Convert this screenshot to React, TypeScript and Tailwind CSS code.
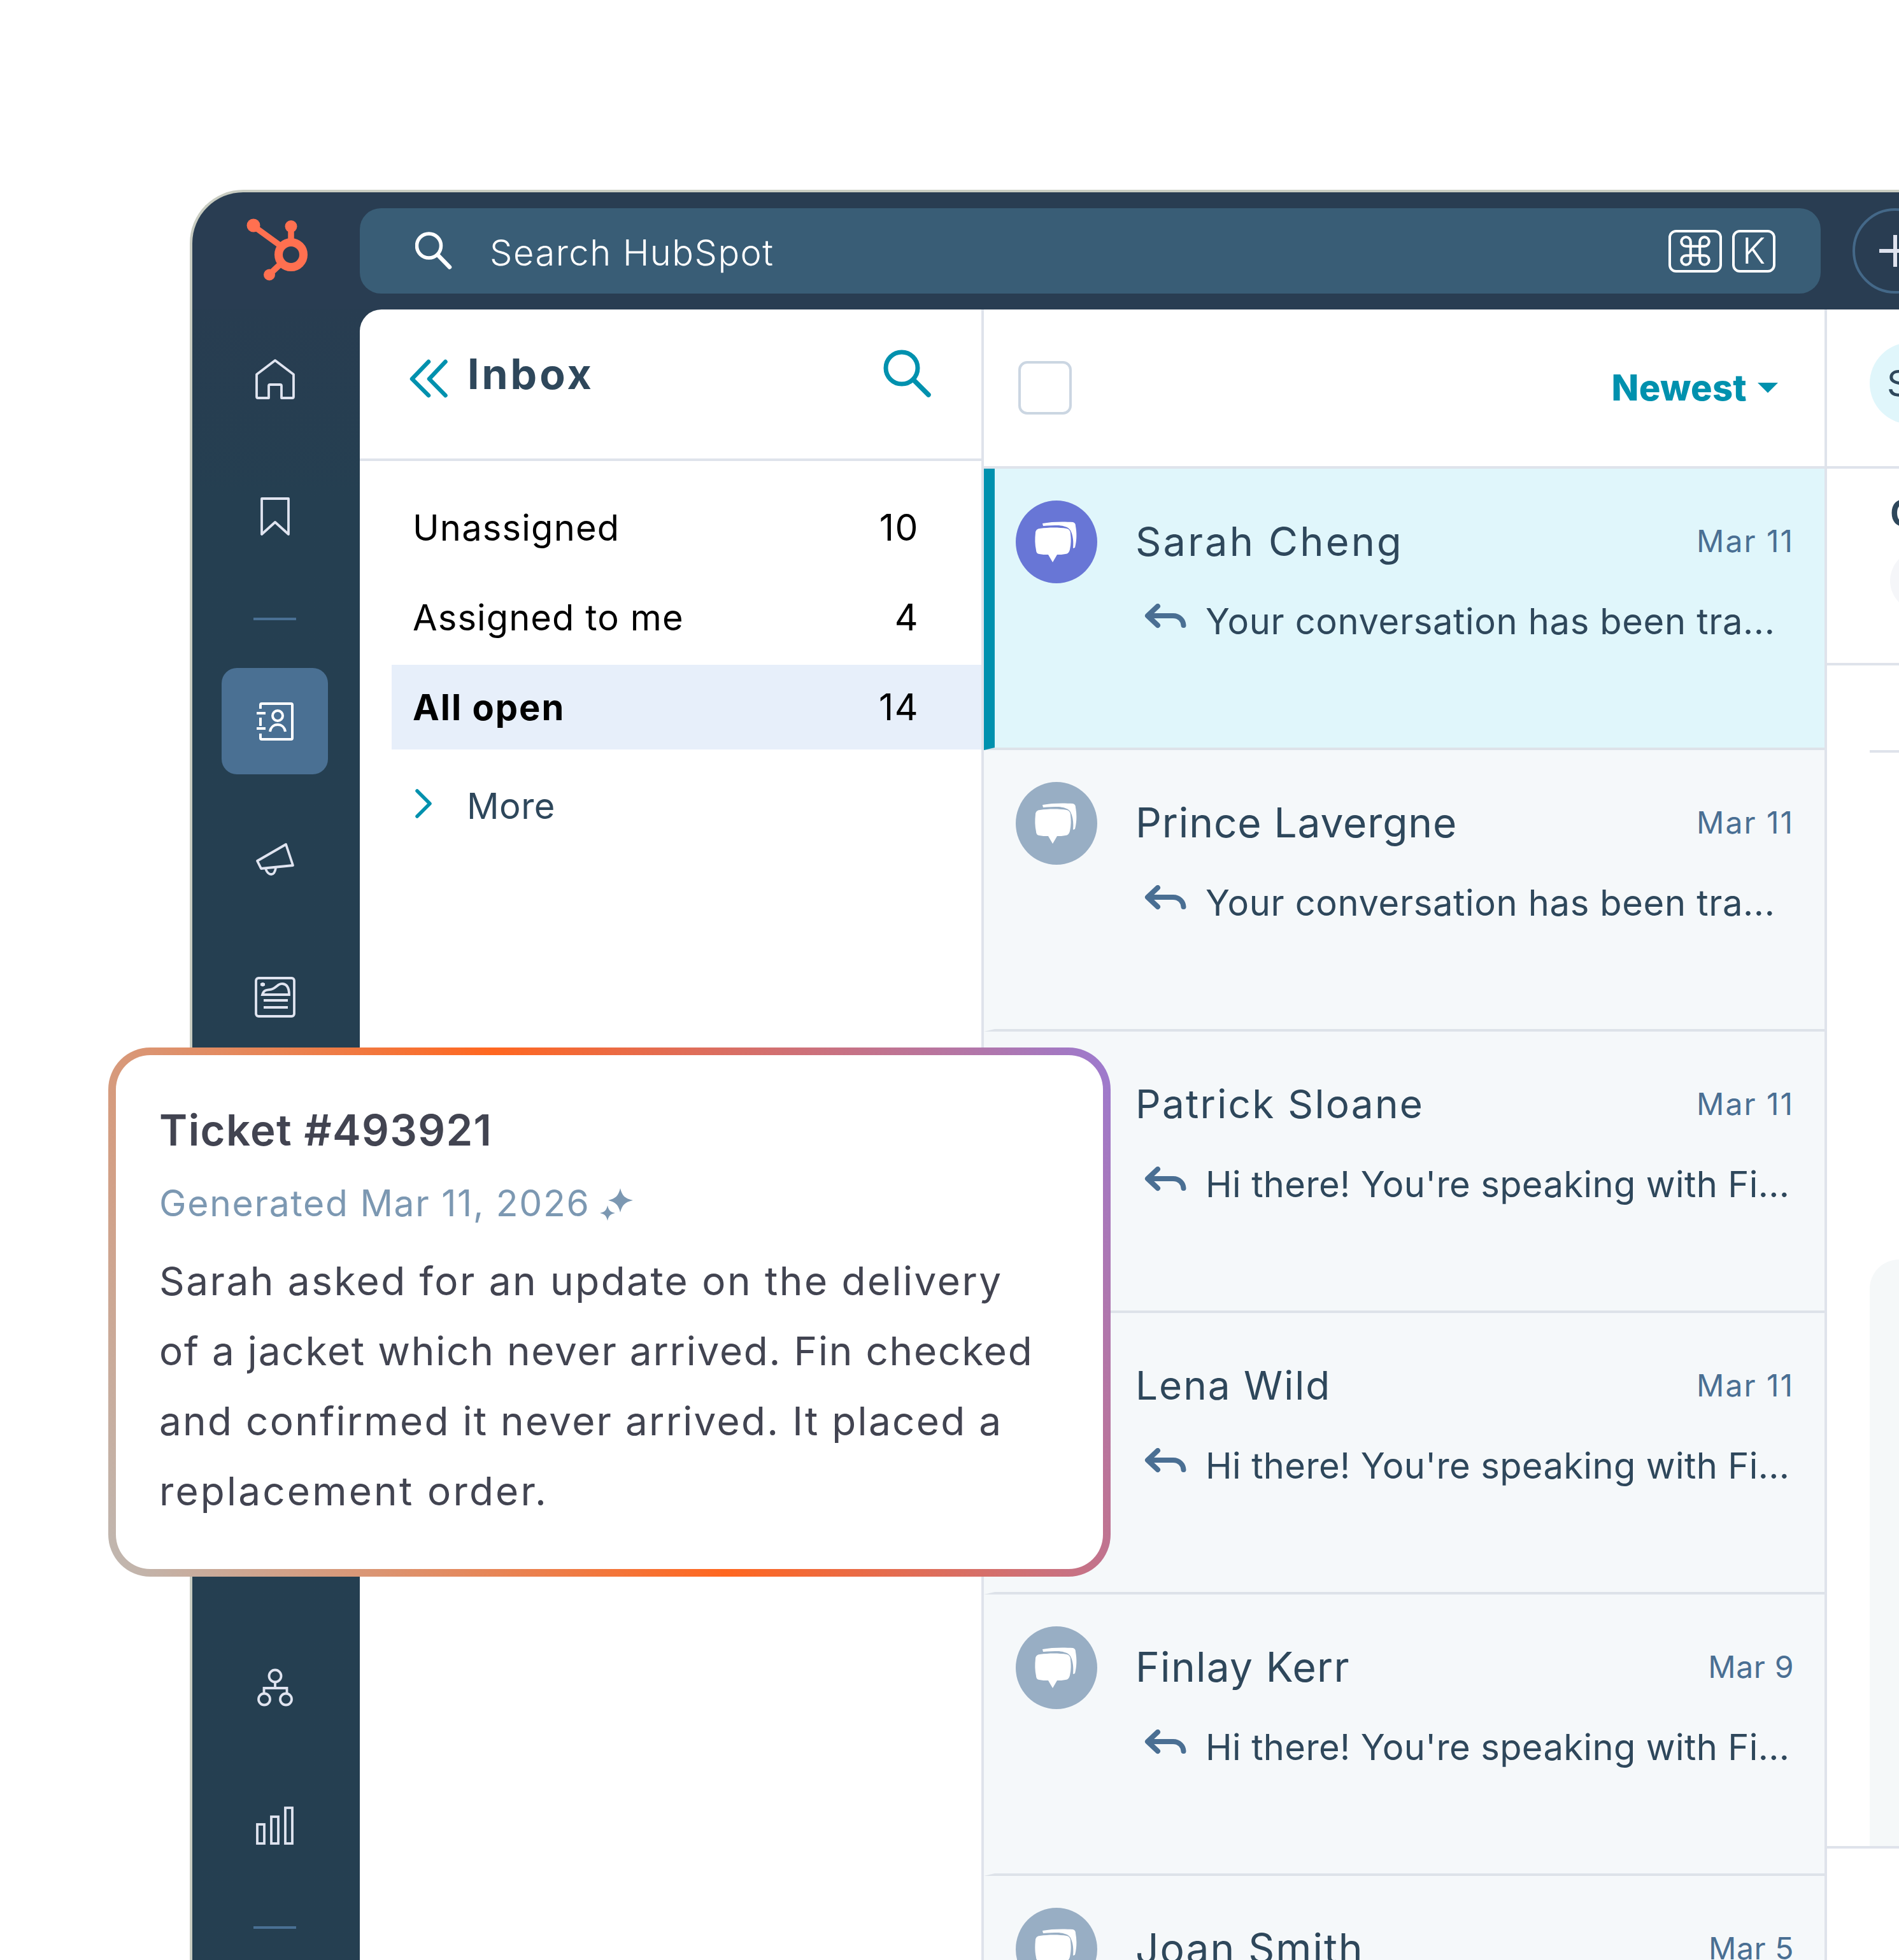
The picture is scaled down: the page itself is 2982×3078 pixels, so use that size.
import { ReactNode } from "react";
import { Command } from "lucide-react";
import clsx from "clsx";

type Conversation = {
  name: string;
  nameClass: string;
  date: string;
  dateClass: string;
  preview: string;
  previewClass: string;
  selected?: boolean;
};

const YOUR = "Your conversation has been tra...";
const HI = "Hi there! You're speaking with Fi...";

const conversations: Conversation[] = [
  {
    name: "Sarah Cheng",
    nameClass: "text-[63px] tracking-[3.2px]",
    date: "Mar 11",
    dateClass: "tracking-[2px]",
    preview: YOUR,
    previewClass: "tracking-[0.68px]",
    selected: true,
  },
  {
    name: "Prince Lavergne",
    nameClass: "text-[64px] tracking-[0.9px]",
    date: "Mar 11",
    dateClass: "tracking-[2px]",
    preview: YOUR,
    previewClass: "tracking-[0.68px]",
  },
  {
    name: "Patrick Sloane",
    nameClass: "text-[62px] tracking-[2.3px]",
    date: "Mar 11",
    dateClass: "tracking-[2px]",
    preview: HI,
    previewClass: "tracking-[0.4px]",
  },
  {
    name: "Lena Wild",
    nameClass: "text-[62px] tracking-[2px]",
    date: "Mar 11",
    dateClass: "tracking-[2px]",
    preview: HI,
    previewClass: "tracking-[0.4px]",
  },
  {
    name: "Finlay Kerr",
    nameClass: "text-[64px] tracking-[1.3px]",
    date: "Mar 9",
    dateClass: "tracking-[0.6px]",
    preview: HI,
    previewClass: "tracking-[0.4px]",
  },
  {
    name: "Joan Smith",
    nameClass: "text-[64px] tracking-[2px]",
    date: "Mar 5",
    dateClass: "tracking-[0.6px]",
    preview: HI,
    previewClass: "tracking-[0.4px]",
  },
];

const folders = [
  { label: "Unassigned", count: 10, className: "tracking-[1.2px]" },
  { label: "Assigned to me", count: 4, className: "tracking-[1.1px]" },
  {
    label: "All open",
    count: 14,
    className: "font-bold tracking-[2px]",
    active: true,
  },
];

export default function App() {
  return (
    <div className="relative h-[3078px] w-[2982px] overflow-hidden bg-white pt-[298px] pl-[298px] font-['Inter',sans-serif] leading-none whitespace-nowrap">
      <div className="flex h-[2780px] flex-col overflow-hidden rounded-tl-[84px] border-t-4 border-l-4 border-[#c8ccc1] bg-[#293d52]">
        <TopBar />
        <div className="flex flex-1 bg-gradient-to-b from-[#283d51] to-[#253f51] to-10%">
          <Sidebar />
          <div className="flex flex-1 overflow-hidden rounded-tl-[34px] bg-white">
            <InboxPanel />
            <ConversationList />
            <DetailPanel />
          </div>
        </div>
      </div>
      <TicketCard />
    </div>
  );
}

function TopBar() {
  return (
    <div className="flex h-[184px] shrink-0 pt-[25px]">
      <div className="w-[263px] shrink-0 pt-[13px] pl-[82px]">
        <HubSpotLogo />
      </div>
      <div className="flex h-[134px] w-[2294px] shrink-0 items-center rounded-[33px] bg-[#395d76] pr-[71px] pl-[87px] text-white">
        <svg width="60" height="60" viewBox="0 0 60 60" fill="none">
          <circle cx="21.500" cy="22" r="19" stroke="currentColor" strokeWidth="5.500" />
          <path d="M35.500 36.500 54 55.500" stroke="currentColor" strokeWidth="6.500" strokeLinecap="round" />
        </svg>
        <span className="ml-[57px] pt-[5px] text-[56px] font-[340] tracking-[1.5px]">
          Search HubSpot
        </span>
        <span className="ml-auto flex h-[67px] w-[84px] items-center justify-center rounded-[12px] border-4 border-white">
          <Command size={58} strokeWidth={1.7} />
        </span>
        <span className="ml-4 flex h-[67px] w-[68px] items-center justify-center rounded-[12px] border-4 border-white text-[56px] font-light">
          K
        </span>
      </div>
      <div className="ml-[50px] flex h-[134px] w-[134px] shrink-0 items-center justify-center rounded-full border-4 border-[#446888]">
        <svg width="52" height="52" viewBox="0 0 52 52" stroke="#dfe3ee" strokeWidth="6">
          <path d="M26 1v50M1 26h50" />
        </svg>
      </div>
    </div>
  );
}

function HubSpotLogo() {
  return (
    <svg width="104" height="104" viewBox="0 0 104 104" fill="none">
      <g stroke="#ff7050" strokeWidth="9.500">
        <path d="M14 15 58 47M73 17v24M39 91 56 75" />
      </g>
      <circle cx="73" cy="60" r="19.5" stroke="#ff7050" strokeWidth="13" />
      <circle cx="14" cy="14" r="10.5" fill="#ff7050" />
      <circle cx="73" cy="15.500" r="9.5" fill="#ff7050" />
      <circle cx="39" cy="91.500" r="9" fill="#ff7050" />
    </svg>
  );
}

function NavIcon({
  children,
  className,
}: {
  children: ReactNode;
  className?: string;
}) {
  return (
    <svg
      width="64"
      height="64"
      viewBox="0 0 64 64"
      fill="none"
      stroke="#e0e4f0"
      strokeWidth="3.8"
      className={clsx("shrink-0", className)}
    >
      {children}
    </svg>
  );
}

function Sidebar() {
  return (
    <div className="flex w-[263px] shrink-0 flex-col items-center pr-1">
      {/* Home */}
      <NavIcon className="mt-[77px]">
        <path
          d="M32 3 3 25v35a2 2 0 0 0 2 2h17V43a2 2 0 0 1 2-2h16a2 2 0 0 1 2 2v19h17a2 2 0 0 0 2-2V25Z"
          strokeLinejoin="round"
        />
      </NavIcon>
      {/* Bookmarks */}
      <NavIcon className="mt-[152px]">
        <path d="M11 4h42v56L32 41 11 60Z" strokeLinejoin="round" />
      </NavIcon>
      <div className="mt-[127px] h-1 w-[67px] shrink-0 bg-[#4a7094]" />
      {/* Contacts */}
      <div className="mt-[75px] flex h-[167px] w-[167px] shrink-0 items-center justify-center rounded-[24px] bg-[#4a7093]">
        <NavIcon>
          <g stroke="#fff" strokeWidth="4">
            <path d="M9 12V6a2 2 0 0 1 2-2h46a2 2 0 0 1 2 2v52a2 2 0 0 1-2 2H11a2 2 0 0 1-2-2v-7M9 26v13" />
            <path d="M3 19h14M3 43h14" />
            <circle cx="36" cy="23" r="8" />
            <path d="M24 48c1-7 6-11 12-11s11 4 12 11" />
          </g>
        </NavIcon>
      </div>
      {/* Marketing */}
      <NavIcon className="mt-[102px]">
        <path d="M4 34 49 8 60 41 10 46Z" strokeLinejoin="round" />
        <path d="M17 46c2 6 5 9 9 9 4 0 6-4 7-10" />
      </NavIcon>
      {/* Content */}
      <NavIcon className="mt-[152px]">
        <rect x="2" y="2" width="60" height="60" rx="4" />
        <path d="M12 28c3-10 9-6 16-9 7-3 9-9 16-8 8 1 10 9 10 17Z" />
        <path d="M14 37h38M14 48h38M9 12h7M12.500 9v6" />
      </NavIcon>
      {/* Automation */}
      <NavIcon className="mt-[1020px]">
        <circle cx="32" cy="14" r="9.500" />
        <circle cx="15" cy="50.500" r="9" />
        <circle cx="49" cy="50.500" r="9" />
        <path d="M32 23v10M14.500 42v-9h36v9" />
      </NavIcon>
      {/* Reporting */}
      <NavIcon className="mt-[153px]">
        <rect x="4" y="30" width="11" height="30" />
        <rect x="26" y="18" width="11" height="42" />
        <rect x="48" y="4" width="11" height="56" />
      </NavIcon>
      <div className="mt-[126px] h-1 w-[67px] shrink-0 bg-[#4a7094]" />
    </div>
  );
}

function InboxPanel() {
  return (
    <div className="w-[976px] shrink-0">
      <div className="flex h-[238px] border-b-4 border-[#dfe3eb] pr-[78px] pl-[78px]">
        <svg width="62" height="62" viewBox="0 0 62 62" fill="none" stroke="#0091ae" strokeWidth="6.500" strokeLinecap="round" strokeLinejoin="round" className="mt-[77px]">
          <path d="M30 5 4 32l26 26M56.500 5 31 32l25.500 26" />
        </svg>
        <span className="mt-[68px] ml-[29px] text-[66px] font-bold tracking-[4px] text-[#2e475b]">
          Inbox
        </span>
        <svg width="76" height="76" viewBox="0 0 76 76" fill="none" stroke="#0091ae" className="mt-[62px] ml-auto">
          <circle cx="29" cy="30" r="25" strokeWidth="7" />
          <path d="M47 48 71 72" strokeWidth="7.500" strokeLinecap="round" />
        </svg>
      </div>
      <div className="mt-[38px] flex flex-col gap-2 text-[56px] text-black">
        {folders.map((folder) => (
          <div
            key={folder.label}
            className={clsx(
              "ml-[50px] flex h-[133px] items-center justify-between pr-[98px] pl-[33px]",
              folder.active && "bg-[#e7effa]"
            )}
          >
            <span className={folder.className}>{folder.label}</span>
            <span className="text-[57px] tracking-[1.5px]">{folder.count}</span>
          </div>
        ))}
      </div>
      <div className="mt-[60px] flex text-[56px] text-[#2e475b]">
        <svg width="27" height="46" viewBox="0 0 27 46" fill="none" stroke="#0091ae" strokeWidth="5.500" strokeLinecap="round" strokeLinejoin="round" className="mt-[2px] ml-[87px]">
          <path d="M3 3 23 23 3 43" />
        </svg>
        <span className="mt-px ml-[54px] tracking-[0.5px]">More</span>
      </div>
    </div>
  );
}

function ConversationList() {
  return (
    <div className="w-[1324px] shrink-0 overflow-hidden border-l-4 border-[#dfe3eb]">
      <div className="flex h-[250px] items-center border-b-4 border-[#dfe3eb] pr-[72px] pl-[54px]">
        <div className="h-[84px] w-[84px] rounded-[14px] border-4 border-[#cbd6e2]" />
        <span className="ml-auto text-[56px] font-extrabold tracking-[0.3px] text-[#0091ae]">
          Newest
        </span>
        <svg width="34" height="17" viewBox="0 0 34 17" className="ml-4">
          <path d="M1 0h32L17 16Z" fill="#0091ae" />
        </svg>
      </div>
      {conversations.map((conversation) => (
        <ConversationRow key={conversation.name} {...conversation} />
      ))}
    </div>
  );
}

function ConversationRow({
  name,
  nameClass,
  date,
  dateClass,
  preview,
  previewClass,
  selected,
}: Conversation) {
  return (
    <div
      className={clsx(
        "h-[442px] border-b-4 border-l-[17px] border-b-[#dde2e9] pt-[50px] pr-[48px] pl-[33px]",
        selected
          ? "border-l-[#0091ae] bg-[#e0f6fb]"
          : "border-l-[#f5f8fa] bg-[#f5f8fa]"
      )}
    >
      <div className="flex h-[130px] items-center">
        <ChatAvatar color={selected ? "#6876d6" : "#98aec4"} />
        <span className={clsx("-mt-[2px] ml-[60px] text-[#2e475b]", nameClass)}>
          {name}
        </span>
        <span
          className={clsx(
            "-mt-[2px] ml-auto text-[48px] text-[#4a6f93]",
            dateClass
          )}
        >
          {date}
        </span>
      </div>
      <div className="mt-[32px] ml-[201px] flex">
        <svg width="68" height="40" viewBox="0 0 68 40" fill="none" stroke="#4a6f93" strokeWidth="8" strokeLinecap="round" strokeLinejoin="round">
          <path d="M22 4 6 19 22 34M7 19H46C56 19 62 26 62.500 34" />
        </svg>
        <span
          className={clsx("ml-[29px] text-[56px] text-[#2e475b]", previewClass)}
        >
          {preview}
        </span>
      </div>
    </div>
  );
}

function ChatAvatar({ color }: { color: string }) {
  return (
    <svg width="128" height="130" viewBox="0 0 128 130" className="shrink-0">
      <ellipse cx="64" cy="65" rx="64" ry="65" fill={color} />
      <path
        d="M42 36C56 33 76 33 90 34c3 1 4 3 4 6 2 11 2 22-1 34l-3 1c1-10 0-20-4-28-4-6-11-7-18-8-8 0-17 0-25 1Z"
        fill="#fff"
      />
      <path
        d="M38 44c14-2 30-2 42 0 4 1 6 4 6 8 1 8 1 16-1 25-1 4-3 7-7 7-4 1-9 1-13 1l-7 12-7-12c-5 0-10 0-14-1-3 0-5-3-5-6-2-9-2-18-1-27 0-4 3-7 7-7Z"
        fill="#fff"
      />
    </svg>
  );
}

function DetailPanel() {
  return (
    <div className="flex w-[117px] shrink-0 flex-col overflow-hidden border-l-4 border-[#dfe3eb]">
      <div className="h-[250px] shrink-0 border-b-4 border-[#dfe3eb] pt-[52px] pl-[67px]">
        <div className="flex h-[128px] w-[260px] items-center rounded-full bg-[#e0f6fb] pl-[27px] text-[56px] text-[#2e475b]">
          S
        </div>
      </div>
      <div className="h-[309px] shrink-0 border-b-4 border-[#dfe3eb] pt-[42px] pl-[99px]">
        <div className="text-[56px] font-bold text-[#2e475b]">C</div>
        <div className="mt-[30px] h-[96px] w-[260px] rounded-full bg-[#f5f6f9]" />
      </div>
      <div className="ml-[67px] h-[137px] shrink-0 border-b-4 border-[#dfe3eb]" />
      <div className="mt-[796px] ml-[67px] h-[921px] shrink-0 rounded-tl-[64px] bg-[#f5f8f9]" />
      <div className="h-1 shrink-0 bg-[#dfe3eb]" />
    </div>
  );
}

function TicketCard() {
  return (
    <div className="absolute top-[1645px] left-[170px] h-[831px] w-[1574px] rounded-[66px] bg-[linear-gradient(66deg,#bfb8b2_0%,#ff6720_50%,#9c7ad0_100%)] p-3">
      <div className="h-full rounded-[54px] bg-white pt-[84px] pl-[68px] text-[#424451]">
        <div className="text-[67px] font-semibold tracking-[1.4px]">
          Ticket #493921
        </div>
        <div className="mt-[53px] flex text-[57px] tracking-[1.7px] text-[#7c98b2]">
          Generated Mar 11, 2026
          <svg width="52" height="52" viewBox="0 0 52 52" fill="currentColor" className="mt-[5px] ml-[16px]">
            <path d="M32 0c3 12 7 16 20 19-13 3-17 7-20 19-3-12-7-16-19-19 12-3 16-7 19-19Z" />
            <path d="M12 27c2 8 4 10 12 12-8 2-10 4-12 12-2-8-4-10-12-12 8-2 10-4 12-12Z" />
          </svg>
        </div>
        <p className="mt-[39px] flex flex-col text-[62px] leading-[110px]">
          <span className="tracking-[2.5px]">
            Sarah asked for an update on the delivery
          </span>
          <span className="tracking-[1.8px]">
            of a jacket which never arrived. Fin checked
          </span>
          <span className="tracking-[2.3px]">
            and confirmed it never arrived. It placed a
          </span>
          <span className="tracking-[3.2px]">replacement order.</span>
        </p>
      </div>
    </div>
  );
}
